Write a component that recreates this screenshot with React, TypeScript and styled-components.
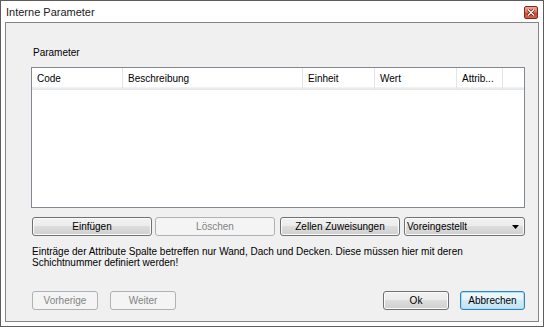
import React from "react";
import styled, { createGlobalStyle, css } from "styled-components";

const GlobalStyle = createGlobalStyle`
  html, body { margin: 0; padding: 0; background: #ffffff; }
  body { font-family: "Liberation Sans", Arial, sans-serif; font-size: 10px; color: #000; }
  * { box-sizing: border-box; }
`;

const Window = styled.div`
  width: 544px;
  height: 327px;
  border: 1px solid #5c5c5c;
  background: #ffffff;
  display: flex;
  flex-direction: column;
  padding: 0 4px 4px 4px;
`;

const TitleBar = styled.div`
  height: 21px;
  flex: none;
  display: flex;
  align-items: center;
  justify-content: space-between;
  padding: 0 1px;
`;

const Title = styled.span`
  font-size: 11px;
  color: #1a1a1a;
  margin-top: 1px;
`;

const CloseButton = styled.div`
  width: 14px;
  height: 13px;
  margin-top: 1px;
  border: 1px solid #7b2c1e;
  border-radius: 2px;
  background: linear-gradient(to bottom, #eaa696 0%, #de7e69 45%, #cb4a30 55%, #d2624a 100%);
  display: flex;
  align-items: center;
  justify-content: center;
`;

const Client = styled.div`
  flex: 1;
  border: 1px solid #848484;
  background: #f0f0f0;
  display: flex;
  flex-direction: column;
  padding: 24px 13px 11px 25px;
`;

const Label = styled.div`
  height: 12px;
  line-height: 12px;
  margin: 0 0 8px 2px;
`;

const Table = styled.div`
  height: 141px;
  border: 1px solid #828790;
  background: #ffffff;
  display: flex;
  flex-direction: column;
`;

const HeaderRow = styled.div`
  height: 22px;
  display: flex;
  background: linear-gradient(to bottom, #ffffff 0, #ffffff 19px, #f3f4f5 19px, #e3e4e6 22px);
`;

const HeaderCell = styled.div<{ $w?: number }>`
  ${(p) => (p.$w ? css`width: ${p.$w}px; flex: none;` : css`flex: 1;`)}
  border-right: 1px solid #e3e4e6;
  padding-left: 5px;
  display: flex;
  align-items: center;
  padding-bottom: 2px;
  white-space: nowrap;
  &:last-child { border-right: none; }
`;

const ButtonRow = styled.div`
  display: flex;
  align-items: center;
  margin-top: 9px;
  padding-left: 1px;
  height: 19px;
`;

const Button = styled.div<{ $w: number; $gap?: number; $disabled?: boolean; $default?: boolean }>`
  width: ${(p) => p.$w}px;
  height: 19px;
  margin-left: ${(p) => p.$gap ?? 0}px;
  border: 1px solid #707070;
  border-radius: 3px;
  background: linear-gradient(to bottom, #f2f2f2 0%, #ebebeb 50%, #dddddd 50%, #cfcfcf 100%);
  box-shadow: inset 0 0 0 1px #fbfbfb;
  display: flex;
  align-items: center;
  justify-content: center;
  color: #000;
  flex: none;
  ${(p) =>
    p.$disabled &&
    css`
      border-color: #adb2b5;
      background: #f4f4f4;
      box-shadow: none;
      color: #838383;
    `}
  ${(p) =>
    p.$default &&
    css`
      border-color: #3c7fb1;
      box-shadow: inset 0 0 0 1px #9fe0fa;
      background: linear-gradient(to bottom, #eef8fd 0%, #e4f3fb 50%, #d2ebf7 50%, #c5e2f1 100%);
    `}
`;

const Dropdown = styled.div<{ $gap: number }>`
  flex: 1;
  height: 19px;
  margin-left: ${(p) => p.$gap}px;
  border: 1px solid #707070;
  border-radius: 3px;
  background: linear-gradient(to bottom, #f2f2f2 0%, #ebebeb 50%, #dddddd 50%, #cfcfcf 100%);
  box-shadow: inset 0 0 0 1px #fbfbfb;
  display: flex;
  align-items: center;
  justify-content: space-between;
  padding: 0 5px 0 2px;
`;

const Note = styled.div`
  margin-top: 10px;
  padding-left: 1px;
  line-height: 11px;
  width: 440px;
`;

const Footer = styled.div`
  margin-top: auto;
  display: flex;
  align-items: center;
  padding-left: 1px;
`;

const Spacer = styled.div`
  flex: 1;
`;

export default function App() {
  return (
    <>
      <GlobalStyle />
      <Window>
        <TitleBar>
          <Title>Interne Parameter</Title>
          <CloseButton>
            <svg width="8" height="7" viewBox="0 0 8 7">
              <path d="M1 0.5 L7 6.5 M7 0.5 L1 6.5" stroke="#5a1a10" strokeWidth="2.6" />
              <path d="M1 0.5 L7 6.5 M7 0.5 L1 6.5" stroke="#ffffff" strokeWidth="1.3" />
            </svg>
          </CloseButton>
        </TitleBar>
        <Client>
          <Label>Parameter</Label>
          <Table>
            <HeaderRow>
              <HeaderCell $w={91}>Code</HeaderCell>
              <HeaderCell $w={180}>Beschreibung</HeaderCell>
              <HeaderCell $w={72}>Einheit</HeaderCell>
              <HeaderCell $w={82}>Wert</HeaderCell>
              <HeaderCell $w={46}>Attrib...</HeaderCell>
              <HeaderCell />
            </HeaderRow>
          </Table>
          <ButtonRow>
            <Button $w={120}>Einfügen</Button>
            <Button $w={120} $gap={3} $disabled>
              Löschen
            </Button>
            <Button $w={120} $gap={5}>
              Zellen Zuweisungen
            </Button>
            <Dropdown $gap={4}>
              <span>Voreingestellt</span>
              <svg width="7" height="4" viewBox="0 0 7 4">
                <path d="M0 0 H7 L3.5 4 Z" fill="#000" />
              </svg>
            </Dropdown>
          </ButtonRow>
          <Note>
            Einträge der Attribute Spalte betreffen nur Wand, Dach und Decken. Diese müssen hier mit deren
            Schichtnummer definiert werden!
          </Note>
          <Footer>
            <Button $w={66} $disabled>
              Vorherige
            </Button>
            <Button $w={66} $gap={12} $disabled>
              Weiter
            </Button>
            <Spacer />
            <Button $w={66}>Ok</Button>
            <Button $w={65} $gap={11} $default>
              Abbrechen
            </Button>
          </Footer>
        </Client>
      </Window>
    </>
  );
}
